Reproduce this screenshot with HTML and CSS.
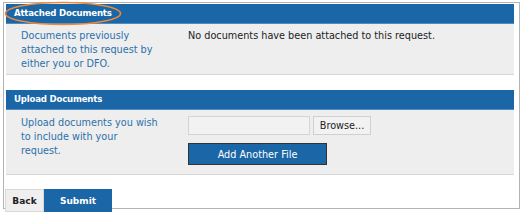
FILE: index.html
```html
<!DOCTYPE html>
<html lang="en">
<head>
    <meta charset="UTF-8">
    <title>Documents</title>
    <link rel="stylesheet" href="styles.css">
</head>
<body>
    <div class="frame">
        <section class="panel">
            <h2 class="panel-title">Attached Documents</h2>
            <div class="panel-row">
                <div class="row-label">Documents previously attached to this request by either you or DFO.</div>
                <div class="row-value">No documents have been attached to this request.</div>
            </div>
            <!-- annotation circle round the heading -->
            <svg class="mark" width="118" height="25" viewBox="0 0 118 25">
                <ellipse cx="59" cy="12.5" rx="57.5" ry="11" fill="none" stroke="#ec8a3c" stroke-width="1.6"/>
            </svg>
        </section>

        <section class="panel upload">
            <h2 class="panel-title">Upload Documents</h2>
            <div class="panel-row">
                <div class="row-label">Upload documents you wish to include with your request.</div>
                <div class="row-value">
                    <div class="file-line">
                        <span class="file-box"></span>
                        <button class="browse" type="button">Browse...</button>
                    </div>
                    <button class="add-file" type="button">Add Another File</button>
                </div>
            </div>
        </section>

        <div class="actions">
            <button class="back" type="button">Back</button>
            <button class="submit" type="button">Submit</button>
        </div>
    </div>
</body>
</html>
```

FILE: styles.css
```css
body {
    margin: 0;
    background: #fff;
    font-family: 'DejaVu Sans', Verdana, sans-serif;
    font-size: 9.7px;
    color: #222;
}

.frame {
    margin: 2px 3px 4px 3px;
    width: 517px;
    height: 207px;
    border: 1px solid #b4b4b4;
    box-sizing: border-box;
    padding: 1px 5px 0 2px;
}

.panel {
    position: relative;
    background: #eeeeee;
    border-bottom: 1px solid #d6d6d6;
}

.panel-title {
    margin: 0;
    height: 19px;
    line-height: 19px;
    padding-left: 8px;
    background: #1a66a6;
    border-bottom: 1px solid #4d8bc0;
    color: #fff;
    font-size: 8.6px;
    letter-spacing: -0.2px;
    font-weight: bold;
}

.panel-row {
    display: flex;
    padding: 5px 0 3px 15px;
    line-height: 14px;
}

.row-label {
    width: 138px;
    margin-right: 29px;
    color: #2c70aa;
}

.row-value {
    flex: 1;
}

.mark {
    position: absolute;
    left: -2px;
    top: -3px;
}

.upload {
    margin-top: 15px;
}

.upload .panel-row {
    padding-top: 6px;
    padding-bottom: 9px;
}

.file-line {
    display: flex;
    gap: 3px;
}

.file-box {
    width: 120px;
    height: 17px;
    background: #f2f2f2;
    border: 1px solid #d4d4d4;
}

button {
    font-family: 'DejaVu Sans', Verdana, sans-serif;
    font-size: 9.7px;
    margin: 0;
    cursor: pointer;
}

.browse {
    width: 58px;
    height: 19px;
    padding: 0;
    background: #f2f2f2;
    border: 1px solid #d0d0d0;
    color: #222;
}

.add-file {
    display: block;
    margin-top: 8px;
    width: 139px;
    height: 22px;
    padding: 0;
    background: #1a66a6;
    border: 1px solid #333;
    color: #fff;
}

.actions {
    display: flex;
    margin-top: 14px;
    margin-left: -1px;
}

.back {
    width: 39px;
    height: 23px;
    padding: 0;
    background: #efefef;
    border: 1px solid #d8d8d8;
    color: #222;
    font-size: 9px;
    font-weight: bold;
}

.submit {
    width: 68px;
    height: 23px;
    padding: 0;
    background: #1a66a6;
    border: none;
    color: #fff;
    font-size: 9px;
    font-weight: bold;
}
```
